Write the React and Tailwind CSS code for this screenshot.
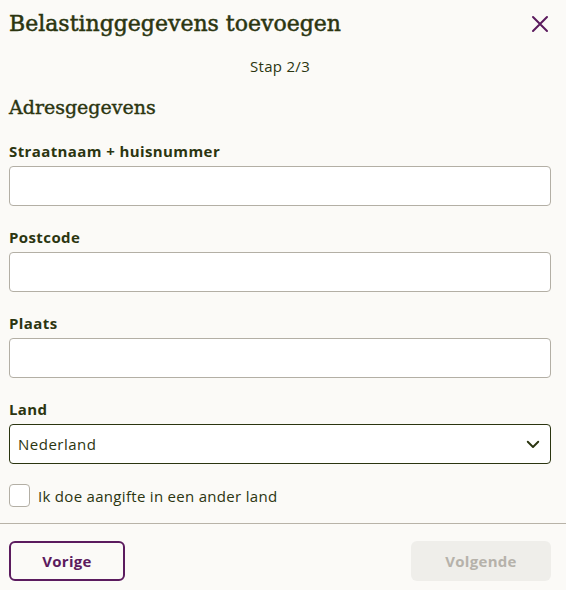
import React from "react";

function Field({ label }) {
  return (
    <div className="flex flex-col gap-[5px]">
      <label className="text-[15px] leading-[20px] font-bold tracking-[0.4px] text-[#2b3510]">{label}</label>
      <input className="h-[40px] w-full rounded-[4px] border border-[#b3afa5] bg-white px-2 outline-none" />
    </div>
  );
}

export default function App() {
  return (
    <div className="w-[566px] h-[590px] bg-[#fbfaf7] flex flex-col font-['Open_Sans',sans-serif] text-[#2b3510]">
      <div className="pl-[9px] pr-[15px] pt-[8px] flex flex-col">
        <div className="flex items-center justify-between h-[32px]">
          <h1 className="font-['DejaVu_Serif',serif] text-[22px] leading-[32px] [-webkit-text-stroke:0.5px_#2b3510] text-[#2b3510]">Belastinggegevens toevoegen</h1>
          <svg width="32" height="32" viewBox="0 0 32 32" className="mr-[-5px]">
            <path d="M9 9 L23 23 M23 9 L9 23" stroke="#5b1b5e" strokeWidth="2" strokeLinecap="round" />
          </svg>
        </div>
        <div className="mt-[16px] text-center text-[15px] leading-[20px] font-medium tracking-[0.3px]">Stap 2/3</div>
        <h2 className="mt-[17px] font-['DejaVu_Serif',serif] text-[19px] leading-[28px] [-webkit-text-stroke:0.4px_#2b3510] text-[#2b3510]">Adresgegevens</h2>
        <div className="mt-[20px] flex flex-col gap-[21px]">
          <Field label="Straatnaam + huisnummer" />
          <Field label="Postcode" />
          <Field label="Plaats" />
          <div className="flex flex-col gap-[5px]">
            <label className="text-[15px] leading-[20px] font-bold tracking-[0.4px]">Land</label>
            <div className="h-[40px] w-full rounded-[4px] border border-[#2b3510] bg-white pl-[8px] pr-[8px] flex items-center justify-between">
              <span className="text-[15px] tracking-[0.5px]">Nederland</span>
              <svg width="18" height="18" viewBox="0 0 24 24" fill="none" stroke="#2b3510" strokeWidth="2.5" strokeLinecap="round" strokeLinejoin="round">
                <path d="M5 9 L12 16 L19 9" />
              </svg>
            </div>
          </div>
        </div>
        <div className="mt-[20px] flex items-center gap-[8px] h-[23px]">
          <span className="w-[21px] h-[23px] rounded-[4px] border border-[#b3afa5] bg-white" />
          <span className="text-[15px] leading-[20px] tracking-[0.3px]">Ik doe aangifte in een ander land</span>
        </div>
      </div>
      <div className="mt-[16px] h-px bg-[#b8b3a8] w-full" />
      <div className="pl-[9px] pr-[15px] pt-[17px] flex items-center justify-between">
        <button className="h-[40px] w-[116px] rounded-[6px] border-2 border-[#5b1b5e] text-[#5b1b5e] font-bold text-[15px] tracking-[0.3px]">Vorige</button>
        <button className="h-[40px] w-[140px] rounded-[6px] bg-[#efeeea] text-[#b6b2aa] font-bold text-[15px] tracking-[0.3px]">Volgende</button>
      </div>
    </div>
  );
}
